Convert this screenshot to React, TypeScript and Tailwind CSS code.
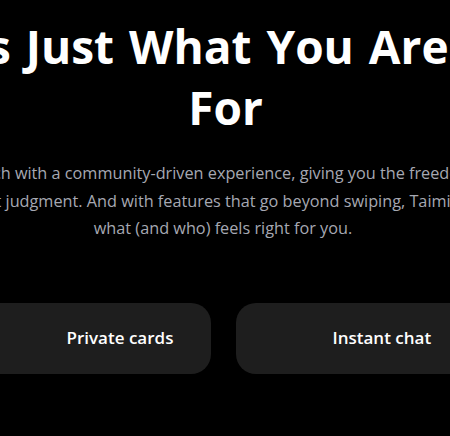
const features = ["Shared interests", "Private cards", "Instant chat", "Safe community"];

export default function App() {
  return (
    <div className="w-[450px] h-[436px] overflow-hidden bg-black font-['Open_Sans','Noto_Sans',sans-serif]">
      <div className="w-[446px] flex flex-col items-center">
        <h1 className="mt-[16px] pl-[5px] whitespace-nowrap text-center text-[46px] leading-[61px] font-bold text-white [word-spacing:3px]">
          Dating Is Just What You Are Looking
          <br />
          For
        </h1>
        <p className="mt-[22px] whitespace-nowrap text-center text-[16.25px] leading-[27.5px] text-[#a6a8b2]">
          Find your match with a community-driven experience, giving you the freedom to connect
          <br />
          without judgment. And with features that go beyond swiping, Taimi shows
          <br />
          what (and who) feels right for you.
        </p>
        <div className="mt-[60px] flex gap-[25px]">
          {features.map((t) => (
            <div
              key={t}
              className="w-[241px] h-[71px] shrink-0 rounded-[20px] bg-[#1e1e1e] flex items-center gap-[17px] pl-6"
            >
              <span className="w-[56px] h-[56px] shrink-0" />
              <span className="text-[17px] font-semibold text-white whitespace-nowrap">{t}</span>
            </div>
          ))}
        </div>
      </div>
    </div>
  );
}
